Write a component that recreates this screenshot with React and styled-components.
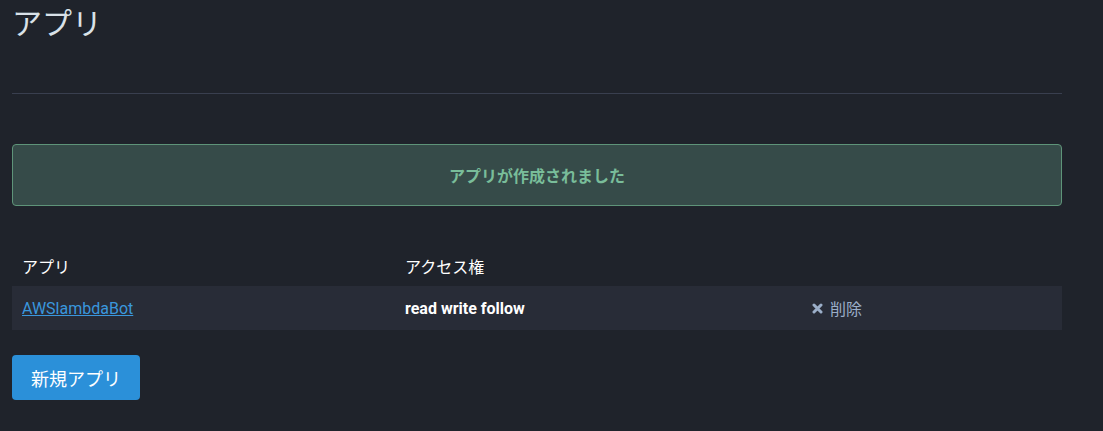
import React from "react";
import styled, { createGlobalStyle } from "styled-components";

const Global = createGlobalStyle`
  body {
    margin: 0;
    background: #1f232b;
    font-family: Roboto, "Noto Sans CJK JP", sans-serif;
    color: #ffffff;
  }
`;

const Page = styled.div`
  width: 1050px;
  padding: 4px 12px 30px;
`;

const Title = styled.h2`
  margin: 0;
  font-size: 30px;
  line-height: 40px;
  font-weight: 400;
  color: #d9e1e8;
`;

const Divider = styled.hr`
  margin: 49px 0 0;
  border: 0;
  border-top: 1px solid #393f4f;
`;

const Flash = styled.div`
  margin-top: 50px;
  height: 60px;
  display: flex;
  align-items: center;
  justify-content: center;
  background: #364b49;
  border: 1px solid #5e9479;
  border-radius: 4px;
  color: #79bd9a;
  font-size: 16px;
  font-weight: 700;
`;

const Table = styled.div`
  margin-top: 40px;
  display: grid;
  grid-template-columns: 383px 407px 1fr;
  font-size: 16px;
`;

const Cell = styled.div`
  display: flex;
  align-items: center;
  padding: 0 10px;
  height: ${(p) => (p.$head ? "40px" : "44px")};
  background: ${(p) => (p.$head ? "transparent" : "#282c37")};
  font-weight: ${(p) => (p.$bold ? 700 : 400)};
`;

const AppLink = styled.a`
  color: #3a97dd;
  text-decoration: underline;
`;

const Delete = styled.a`
  display: inline-flex;
  align-items: center;
  gap: 7px;
  color: #9baec8;
  text-decoration: none;
`;

const Button = styled.button`
  margin-top: 25px;
  height: 45px;
  width: 128px;
  padding: 0;
  background: #2b90d9;
  border: 0;
  border-radius: 4px;
  color: #fff;
  font-family: inherit;
  font-size: 18px;
`;

function Cross() {
  return (
    <svg width="11" height="11" viewBox="0 0 11 11">
      <path d="M2 2 L9 9 M9 2 L2 9" stroke="#9baec8" strokeWidth="3" strokeLinecap="round" />
    </svg>
  );
}

export default function App() {
  return (
    <Page>
      <Global />
      <Title>アプリ</Title>
      <Divider />
      <Flash>アプリが作成されました</Flash>
      <Table>
        <Cell $head>アプリ</Cell>
        <Cell $head>アクセス権</Cell>
        <Cell $head />
        <Cell>
          <AppLink href="#">AWSlambdaBot</AppLink>
        </Cell>
        <Cell $bold>read write follow</Cell>
        <Cell>
          <Delete href="#">
            <Cross />
            削除
          </Delete>
        </Cell>
      </Table>
      <Button>新規アプリ</Button>
    </Page>
  );
}
